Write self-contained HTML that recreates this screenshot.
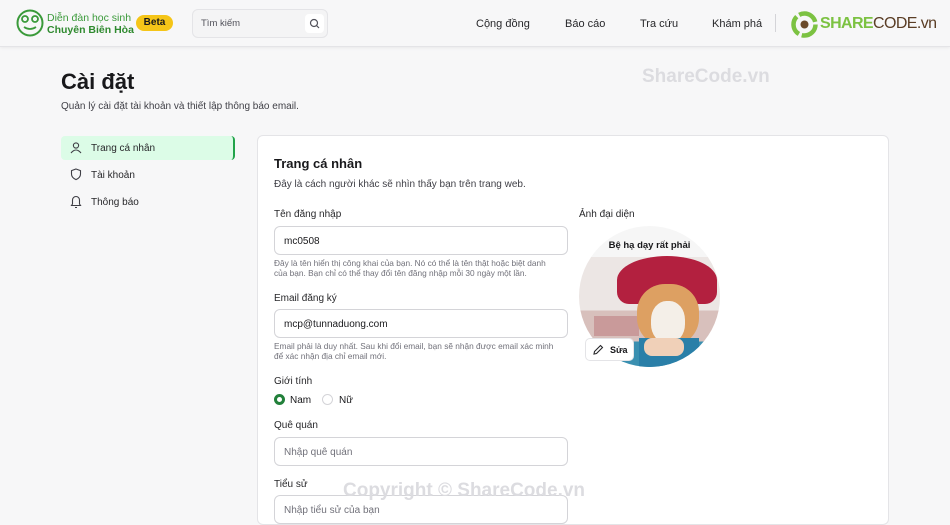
<!DOCTYPE html><html><head><meta charset="utf-8"><style>
*{box-sizing:border-box;margin:0;padding:0}
body{width:950px;height:515px;overflow:hidden;background:#f7f7f8;font-family:"Liberation Sans",sans-serif;color:#18181b;position:relative}
.hdr{position:absolute;left:0;top:0;width:950px;height:47px;background:#f7f7f8;border-bottom:1px solid #e4e4e7;box-shadow:0 1px 3px rgba(0,0,0,.06)}
.a{position:absolute}
.nav{font-size:11px;color:#27272a}
.inp{position:absolute;left:274px;width:294px;height:29px;border:1px solid #d4d4d8;border-radius:6px;background:#fff;font-size:10px;padding:9px 9px;color:#18181b}
.lbl{position:absolute;left:274px;font-size:10px;color:#27272a}
.help{position:absolute;left:274px;font-size:8.3px;color:#71717a;line-height:10px;width:300px}
.side{position:absolute;left:61px;width:174px;height:24px;font-size:10px;padding:7px 0 0 30px;color:#27272a}
</style></head><body>
<div class="hdr">
<svg class="a" style="left:16px;top:9px" width="28" height="28" viewBox="0 0 28 28"><circle cx="14" cy="14" r="12.5" fill="none" stroke="#3a9a3a" stroke-width="2"/><circle cx="9" cy="10" r="3" fill="none" stroke="#3a9a3a" stroke-width="1.8"/><circle cx="19" cy="10" r="3" fill="none" stroke="#3a9a3a" stroke-width="1.8"/><path d="M8 18q6 4 12 0" fill="none" stroke="#3a9a3a" stroke-width="1.8"/></svg>
<div class="a" style="left:47px;top:12px;font-size:10.5px;color:#3a9a3a">Diễn đàn học sinh</div>
<div class="a" style="left:47px;top:24px;font-size:10.5px;color:#2f8a2f;font-weight:bold">Chuyên Biên Hòa</div>
<div class="a" style="left:136px;top:15px;width:37px;height:16px;border-radius:8px;background:#f5c518;font-size:10px;font-weight:bold;text-align:center;line-height:16px">Beta</div>
<div class="a" style="left:192px;top:9px;width:136px;height:29px;border:1px solid #e4e4e7;border-radius:6px;background:#f4f4f5"></div>
<div class="a" style="left:201px;top:18px;font-size:9.5px;color:#52525b">Tìm kiếm</div>
<div class="a" style="left:305px;top:14px;width:19px;height:19px;background:#fff;border-radius:4px"><svg width="19" height="19" viewBox="0 0 19 19"><circle cx="9" cy="9" r="3.5" fill="none" stroke="#52525b" stroke-width="1.2"/><path d="M11.5 11.5l2.5 2.5" stroke="#52525b" stroke-width="1.2"/></svg></div>
<div class="a nav" style="left:476px;top:18px">Cộng đồng</div>
<div class="a nav" style="left:565px;top:18px">Báo cáo</div>
<div class="a nav" style="left:640px;top:18px">Tra cứu</div>
<div class="a nav" style="left:712px;top:18px">Khám phá</div>
<div class="a" style="left:775px;top:14px;width:1px;height:18px;background:#d4d4d8"></div>
<svg class="a" style="left:791px;top:11px" width="27" height="27" viewBox="0 0 27 27"><circle cx="13.5" cy="13.5" r="11" fill="none" stroke="#7cc242" stroke-width="4.5" stroke-dasharray="20 3"/><circle cx="13.5" cy="13.5" r="4" fill="#6b4a2a"/></svg>
<div class="a" style="left:820px;top:15px;font-size:16px;font-weight:bold;color:#7cc242;letter-spacing:-.6px">SHARE<span style="font-weight:normal;color:#5a3d25">CODE.vn</span></div>
</div>
<div class="a" style="left:642px;top:66px;font-size:19px;font-weight:bold;color:#dcdce0">ShareCode.vn</div>
<div class="a" style="left:61px;top:69px;font-size:22px;font-weight:bold">Cài đặt</div>
<div class="a" style="left:61px;top:101px;font-size:10px;color:#3f3f46">Quản lý cài đặt tài khoản và thiết lập thông báo email.</div>
<div class="side" style="top:136px;background:#dcfce7;border-right:2px solid #22a34a;border-radius:4px">Trang cá nhân</div>
<div class="side" style="top:163px">Tài khoản</div>
<div class="side" style="top:190px">Thông báo</div>
<svg class="a" style="left:69px;top:141px" width="14" height="70" viewBox="0 0 14 70" fill="none" stroke="#3f3f46" stroke-width="1.1"><circle cx="7" cy="4.5" r="2.6"/><path d="M2 12q5-6 10 0"/><path d="M7 28l4.5 1.6v3.5q0 3.5-4.5 5.5q-4.5-2-4.5-5.5v-3.5z"/><path d="M3.5 63v-4a3.5 3.5 0 017 0v4l1 1.5h-9zM6 66.5h2"/></svg>
<div class="a" style="left:257px;top:135px;width:632px;height:390px;background:#fff;border:1px solid #e4e4e7;border-radius:6px"></div>
<div class="a" style="left:274px;top:156px;font-size:13px;font-weight:bold">Trang cá nhân</div>
<div class="a" style="left:274px;top:179px;font-size:10px;color:#3f3f46">Đây là cách người khác sẽ nhìn thấy bạn trên trang web.</div>
<div class="lbl" style="top:209px">Tên đăng nhập</div>
<div class="inp" style="top:226px">mc0508</div>
<div class="help" style="top:258px">Đây là tên hiển thị công khai của bạn. Nó có thể là tên thật hoặc biệt danh<br>của bạn. Bạn chỉ có thể thay đổi tên đăng nhập mỗi 30 ngày một lần.</div>
<div class="lbl" style="top:293px">Email đăng ký</div>
<div class="inp" style="top:309px">mcp@tunnaduong.com</div>
<div class="help" style="top:341px">Email phải là duy nhất. Sau khi đổi email, bạn sẽ nhận được email xác minh<br>để xác nhận địa chỉ email mới.</div>
<div class="lbl" style="top:376px">Giới tính</div>
<div class="a" style="left:274px;top:394px;width:11px;height:11px;border-radius:50%;border:3px solid #22803a"></div>
<div class="a" style="left:290px;top:395px;font-size:10px">Nam</div>
<div class="a" style="left:322px;top:394px;width:11px;height:11px;border-radius:50%;border:1px solid #d4d4d8"></div>
<div class="a" style="left:339px;top:395px;font-size:10px">Nữ</div>
<div class="lbl" style="top:420px">Quê quán</div>
<div class="inp" style="top:437px;color:#71717a">Nhập quê quán</div>
<div class="lbl" style="top:479px">Tiểu sử</div>
<div class="inp" style="top:495px;color:#71717a">Nhập tiểu sử của bạn</div>
<div class="a" style="left:579px;top:209px;font-size:10px;color:#27272a">Ảnh đại diện</div>
<div class="a" style="left:579px;top:226px;width:141px;height:141px;border-radius:50%;overflow:hidden;background:linear-gradient(#f6f6f6 0 22%,#ece6e4 22% 60%,#d8c0bc 60% 82%,#3a8fb0 82%)">
<div class="a" style="left:0;top:14px;width:141px;text-align:center;font-size:9.5px;font-weight:bold">Bệ hạ dạy rất phải</div>
<div class="a" style="left:15px;top:90px;width:45px;height:20px;background:#c99a9a"></div>
<div class="a" style="left:38px;top:30px;width:100px;height:48px;border-radius:50% 50% 12px 12px;background:#b3203f"></div>
<div class="a" style="left:58px;top:58px;width:62px;height:62px;border-radius:45%;background:#dda062"></div>
<div class="a" style="left:72px;top:75px;width:34px;height:42px;border-radius:45%;background:#f4efe8"></div>
<div class="a" style="left:60px;top:112px;width:60px;height:30px;background:#2a7fa8"></div>
<div class="a" style="left:65px;top:112px;width:40px;height:18px;border-radius:8px;background:#f0d0b8"></div>
</div>
<div class="a" style="left:585px;top:338px;width:49px;height:23px;background:#fff;border:1px solid #e4e4e7;border-radius:5px;font-size:9px;font-weight:bold;padding:6px 0 0 24px">Sửa</div>
<svg class="a" style="left:592px;top:344px" width="12" height="12" viewBox="0 0 12 12" fill="none" stroke="#27272a" stroke-width="1.1"><path d="M2 10l.5-2.5 6-6 2 2-6 6z"/></svg>
<div class="a" style="left:343px;top:480px;font-size:19px;font-weight:bold;color:#dcdce0">Copyright © ShareCode.vn</div>
</body></html>
